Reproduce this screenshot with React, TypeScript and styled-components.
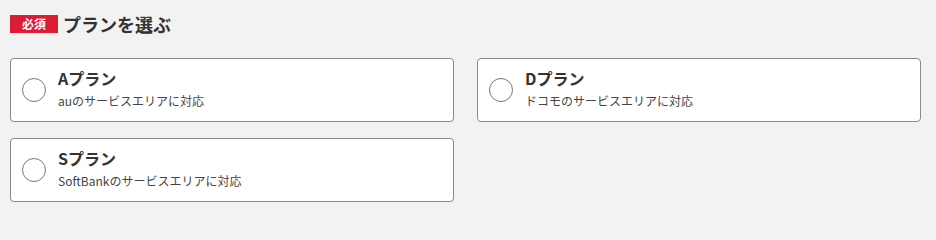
import styled, { createGlobalStyle } from 'styled-components';

const plans = [
  { id: 'a', name: 'Aプラン', note: 'auのサービスエリアに対応' },
  { id: 'd', name: 'Dプラン', note: 'ドコモのサービスエリアに対応' },
  { id: 's', name: 'Sプラン', note: 'SoftBankのサービスエリアに対応' },
];

const GlobalStyle = createGlobalStyle`
  html, body {
    margin: 0;
    background: #f2f2f2;
  }
  body {
    font-family: "Noto Sans CJK JP", "Noto Sans", sans-serif;
    color: #333;
  }
`;

export default function App() {
  return (
    <>
      <GlobalStyle />
      <Wrapper>
        <Heading>
          <Badge>必須</Badge>
          <Title>プランを選ぶ</Title>
        </Heading>
        <PlanGrid>
          {plans.map((plan) => (
            <PlanCard key={plan.id}>
              <Radio type="radio" name="plan" value={plan.id} />
              <PlanText>
                <PlanName>{plan.name}</PlanName>
                <PlanNote>{plan.note}</PlanNote>
              </PlanText>
            </PlanCard>
          ))}
        </PlanGrid>
      </Wrapper>
    </>
  );
}

const Wrapper = styled.div`
  padding: 10px 16px 0 10px;
`;

const Heading = styled.div`
  display: flex;
  align-items: center;
  gap: 5px;
  height: 28px;
  margin-bottom: 20px;
`;

const Badge = styled.span`
  display: inline-flex;
  align-items: center;
  justify-content: center;
  width: 48px;
  height: 18px;
  background: #dc1c35;
  color: #fff;
  font-size: 12px;
  font-weight: bold;
  line-height: 1;
`;

const Title = styled.h2`
  margin: 0;
  font-size: 18px;
  font-weight: bold;
  line-height: 28px;
  color: #333;
`;

const PlanGrid = styled.div`
  display: grid;
  grid-template-columns: 444px 444px;
  column-gap: 23px;
  row-gap: 16px;
`;

const PlanCard = styled.label`
  display: flex;
  align-items: center;
  gap: 12px;
  height: 64px;
  box-sizing: border-box;
  padding: 0 11px;
  background: #fff;
  border: 1px solid #8a8a8a;
  border-radius: 4px;
  cursor: pointer;
`;

const Radio = styled.input`
  appearance: none;
  margin: 0;
  flex: none;
  width: 24px;
  height: 24px;
  border: 1.5px solid #777;
  border-radius: 50%;
  background: #fff;
  box-sizing: border-box;
`;

const PlanText = styled.div`
  display: flex;
  flex-direction: column;
  gap: 3px;
  margin-top: -2px;
`;

const PlanName = styled.span`
  font-size: 16px;
  font-weight: bold;
  line-height: 20px;
  color: #333;
`;

const PlanNote = styled.span`
  font-size: 12px;
  line-height: 20px;
  color: #444;
`;
